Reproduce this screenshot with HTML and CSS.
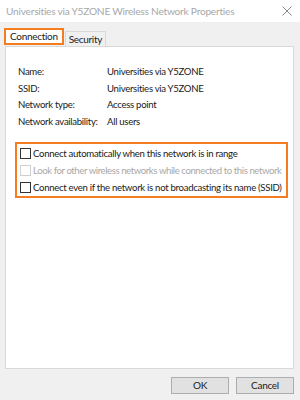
FILE: index.html
```html
<!DOCTYPE html>
<html>
<head>
<meta charset="utf-8">
<link rel="stylesheet" href="styles.css">
</head>
<body>
<div class="window">
  <div class="titlebar">
    <span class="title">Universities via Y5ZONE Wireless Network Properties</span>
    <svg class="close" width="10" height="10" viewBox="0 0 10 10"><path d="M0.5 0.5L9.5 9.5M9.5 0.5L0.5 9.5" stroke="#8a8a8a" stroke-width="1"/></svg>
  </div>
  <div class="body">
    <div class="tabs">
      <div class="tab active">Connection</div>
      <div class="tab">Security</div>
    </div>
    <div class="panel">
      <div class="info">
        <span class="lbl">Name:</span><span>Universities via Y5ZONE</span>
        <span class="lbl">SSID:</span><span>Universities via Y5ZONE</span>
        <span class="lbl">Network type:</span><span>Access point</span>
        <span class="lbl">Network availability:</span><span>All users</span>
      </div>
      <div class="checks">
        <div class="check"><span class="box"></span>Connect automatically when this network is in range</div>
        <div class="check disabled"><span class="box"></span>Look for other wireless networks while connected to this network</div>
        <div class="check"><span class="box"></span>Connect even if the network is not broadcasting its name (SSID)</div>
      </div>
    </div>
    <div class="buttons">
      <div class="btn">OK</div>
      <div class="btn">Cancel</div>
    </div>
  </div>
</div>
</body>
</html>
```
FILE: styles.css
```css
* { box-sizing: border-box; }
html, body { margin: 0; padding: 0; }
body {
  width: 300px;
  height: 400px;
  font-family: "Lato", "Liberation Sans", sans-serif;
  font-size: 9.6px;
  letter-spacing: -0.3px;
  color: #1a1a1a;
  background: #f0f0f0;
}
.window { width: 300px; height: 400px; display: flex; flex-direction: column; }
.titlebar {
  height: 22px;
  background: #fff;
  display: flex;
  align-items: center;
  justify-content: space-between;
  padding: 0 8px 0 6px;
}
.title { color: #a8a8a8; font-size: 10.2px; letter-spacing: -0.25px; white-space: nowrap; }
.body { flex: 1; padding: 6px 6px 0 5px; display: flex; flex-direction: column; }
.tabs { display: flex; align-items: flex-end; height: 18px; margin-left: -1px; }
.tab {
  height: 15px;
  padding: 0 3px;
  border: 1px solid #d9d9d9;
  border-bottom: none;
  background: #f0f0f0;
  line-height: 14px;
  font-size: 10px;
}
.tab.active {
  height: 17px;
  padding: 0 4px;
  background: #fff;
  border: 2px solid #f57d1f;
  line-height: 13px;
  margin-right: 1px;
  margin-bottom: 1px;
}
.panel {
  background: #fff;
  border: 1px solid #d9d9d9;
  height: 323px;
  padding: 17px 5px 0 9px;
}
.info {
  display: grid;
  grid-template-columns: 89px 1fr;
  line-height: 16.7px;
  white-space: nowrap;
  margin-left: 3px;
}
.checks {
  margin-top: 11px;
  border: 2px solid #f57d1f;
  padding: 1px 3px 0;
}
.check {
  display: flex;
  align-items: center;
  height: 17px;
  white-space: nowrap;
}
.check.disabled { color: #a8a8a8; letter-spacing: -0.42px; }
.box {
  width: 11px;
  height: 11px;
  border: 1px solid #333;
  background: #fff;
  margin-right: 2px;
  flex: none;
}
.check.disabled .box { border-color: #cfcfcf; }
.buttons {
  display: flex;
  justify-content: flex-end;
  gap: 7px;
  padding-top: 8px;
}
.btn {
  width: 58px;
  height: 17px;
  background: #e1e1e1;
  border: 1px solid #adadad;
  text-align: center;
  line-height: 15px;
  font-size: 10px;
}
```
